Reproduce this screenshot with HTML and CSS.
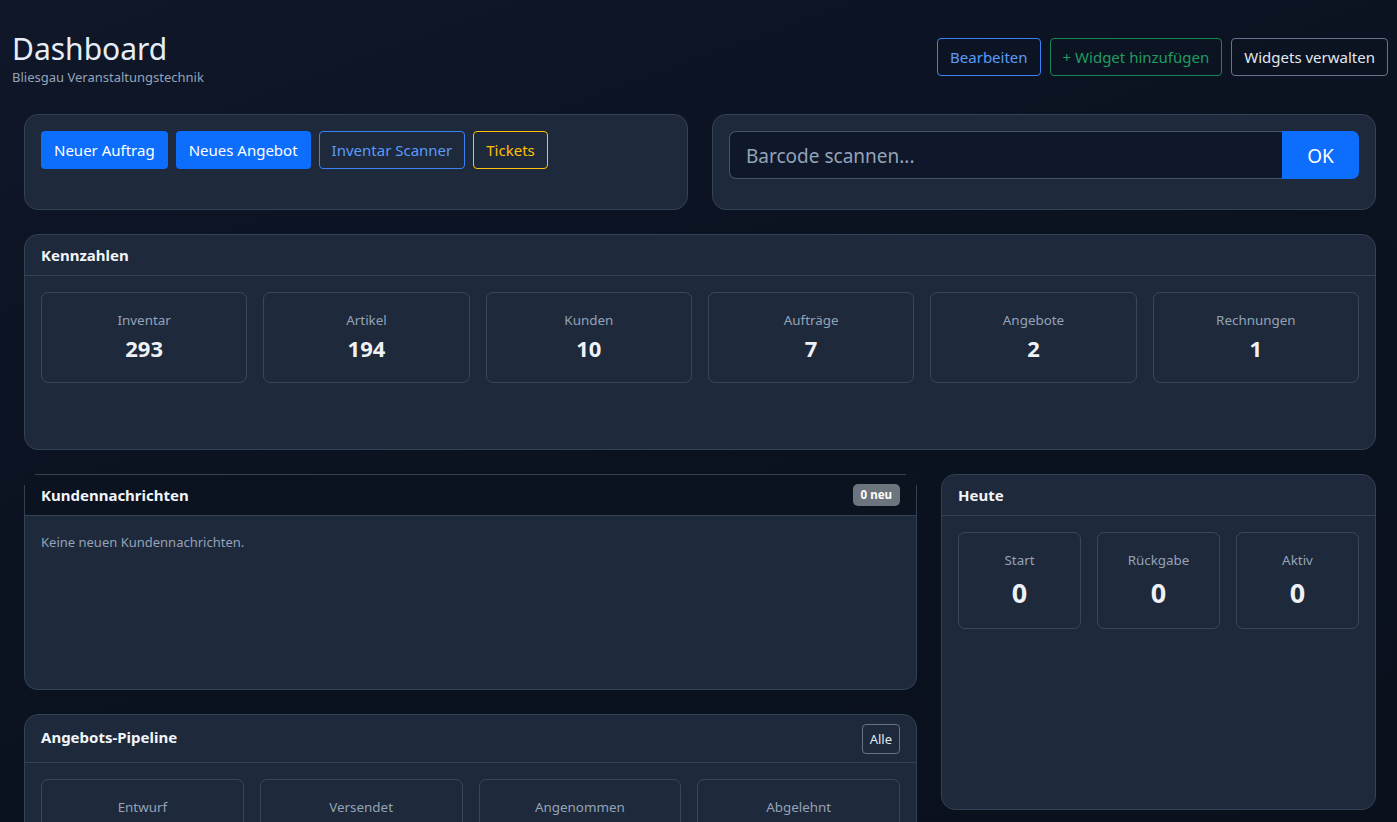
FILE: index.html
```html
<!DOCTYPE html>
<html lang="de">
  <head>
    <title>Dashboard</title>
    <meta charset="UTF-8">
    <link rel="stylesheet" href="styles.css">
  </head>
  <body>
    <!--Page header with widget controls-->
    <div class="page-head">
      <div>
        <h1>Dashboard</h1>
        <div class="subtitle">Bliesgau Veranstaltungstechnik</div>
      </div>
      <div class="head-actions">
        <button class="btn btn-outline-primary">Bearbeiten</button>
        <button class="btn btn-outline-success">+ Widget hinzufügen</button>
        <button class="btn btn-outline-light">Widgets verwalten</button>
      </div>
    </div>

    <div class="content">
      <!--Quick actions and barcode scanner-->
      <div class="row two">
        <div class="card card-pad quick">
          <button class="btn btn-primary">Neuer Auftrag</button>
          <button class="btn btn-primary">Neues Angebot</button>
          <button class="btn btn-outline-primary">Inventar Scanner</button>
          <button class="btn btn-outline-warning">Tickets</button>
        </div>
        <div class="card card-pad scan">
          <div class="input-group">
            <input type="text" class="scan-input" placeholder="Barcode scannen...">
            <button class="btn-ok">OK</button>
          </div>
        </div>
      </div>

      <!--Key figures-->
      <div class="card kpi-card">
        <div class="card-header">Kennzahlen</div>
        <div class="card-body">
          <div class="stat-grid six">
            <div class="stat"><div class="stat-label">Inventar</div><div class="stat-value">293</div></div>
            <div class="stat"><div class="stat-label">Artikel</div><div class="stat-value">194</div></div>
            <div class="stat"><div class="stat-label">Kunden</div><div class="stat-value">10</div></div>
            <div class="stat"><div class="stat-label">Aufträge</div><div class="stat-value">7</div></div>
            <div class="stat"><div class="stat-label">Angebote</div><div class="stat-value">2</div></div>
            <div class="stat"><div class="stat-label">Rechnungen</div><div class="stat-value">1</div></div>
          </div>
        </div>
      </div>

      <div class="row main-split">
        <div class="col-left">
          <!--Customer messages-->
          <div class="card msg-card">
            <div class="card-header dark">
              <span>Kundennachrichten</span>
              <span class="badge">0 neu</span>
            </div>
            <div class="card-body">
              <p class="muted">Keine neuen Kundennachrichten.</p>
            </div>
          </div>

          <!--Offer pipeline-->
          <div class="card pipe-card">
            <div class="card-header tall">
              <span>Angebots-Pipeline</span>
              <button class="btn-sm">Alle</button>
            </div>
            <div class="card-body">
              <div class="stat-grid four">
                <div class="stat pipe"><div class="stat-label">Entwurf</div></div>
                <div class="stat pipe"><div class="stat-label">Versendet</div></div>
                <div class="stat pipe"><div class="stat-label">Angenommen</div></div>
                <div class="stat pipe"><div class="stat-label">Abgelehnt</div></div>
              </div>
            </div>
          </div>
        </div>

        <!--Today-->
        <div class="card today-card">
          <div class="card-header">Heute</div>
          <div class="card-body">
            <div class="stat-grid three">
              <div class="stat tall-stat"><div class="stat-label">Start</div><div class="stat-value big">0</div></div>
              <div class="stat tall-stat"><div class="stat-label">Rückgabe</div><div class="stat-value big">0</div></div>
              <div class="stat tall-stat"><div class="stat-label">Aktiv</div><div class="stat-value big">0</div></div>
            </div>
          </div>
        </div>
      </div>
    </div>
  </body>
</html>
```
FILE: styles.css
```css
body {
	margin: 0;
	font-family: "Segoe UI", "Noto Sans", "Liberation Sans", sans-serif;
	color: #e2e8f0;
	background: linear-gradient(160deg, #0f1729 0%, #0b1220 45%, #0a111d 100%);
	min-height: 822px;
	overflow: hidden;
}
button {font-family: inherit;}

/* header */
.page-head {
	display: flex;
	justify-content: space-between;
	align-items: flex-start;
	padding: 32px 9px 0 12px;
}
h1 {
	margin: 0;
	font-size: 30px;
	font-weight: 400;
	line-height: 34px;
	color: #e6edf7;
}
.subtitle {
	margin-top: 3px;
	font-size: 13px;
	color: #94a3b8;
	line-height: 16px;
}
.head-actions {
	display: flex;
	gap: 9px;
	margin-top: 6px;
}

/* buttons */
.btn {
	font-size: 15px;
	line-height: 22px;
	padding: 7px 12px;
	border-radius: 4px;
	border: 1px solid transparent;
	background: transparent;
	cursor: pointer;
}
.btn-primary {
	background-color: #0d6efd;
	color: #fff;
}
.btn-outline-primary {
	border-color: #3b82f6;
	color: #5b9bfa;
}
.btn-outline-success {
	border-color: #198754;
	color: #1f9d60;
}
.btn-outline-light {
	border-color: #64748b;
	color: #e2e8f0;
}
.btn-outline-warning {
	border-color: #ffc107;
	color: #ffc107;
}

/* layout */
.content {
	padding: 29px 21px 0 24px;
}
.row {
	display: flex;
	gap: 24px;
}
.two > .card {flex: 1;}
.card {
	background-color: #1e293b;
	border: 1px solid #334155;
	border-radius: 14px;
	box-sizing: border-box;
}
.card-pad {
	padding: 16px 16px 0 16px;
	height: 96px;
}
.quick {
	display: flex;
	gap: 8px;
	align-items: flex-start;
}
.input-group {
	display: flex;
	height: 48px;
}
.scan-input {
	flex: 1;
	background-color: #0f172a;
	border: 1px solid #475569;
	border-right: none;
	border-radius: 7px 0 0 7px;
	padding: 2px 16px 0 16px;
	font-family: inherit;
	font-size: 19px;
	color: #e2e8f0;
}
.scan-input::placeholder {color: #94a3b8;}
.btn-ok {
	width: 77px;
	background-color: #0d6efd;
	border: none;
	border-radius: 0 7px 7px 0;
	color: #fff;
	font-size: 19px;
	padding-top: 2px;
}

.card-header {
	display: flex;
	justify-content: space-between;
	align-items: center;
	height: 41px;
	padding: 0 16px;
	box-sizing: border-box;
	border-bottom: 1px solid #334155;
	font-size: 15px;
	font-weight: 700;
	color: #f1f5f9;
}
/* dark header paints over the rounded top corners */
.msg-card {
	border-top: none;
	border-radius: 0 0 14px 14px;
}
.card-header.dark {
	height: 42px;
	margin: 0 -1px;
	padding: 1px 17px 0 17px;
	background:
		linear-gradient(#334155, #334155) 11px 0 / calc(100% - 22px) 1px no-repeat,
		linear-gradient(#334155, #334155) 0 11px / 1px 100% no-repeat,
		linear-gradient(#334155, #334155) 100% 11px / 1px 100% no-repeat,
		#0b1220;
}
.card-header.tall {
	height: 48px;
	padding-bottom: 4px;
}
.card-header.tall .btn-sm {margin-top: 4px;}
.card-body {padding: 16px;}

.kpi-card {
	margin-top: 24px;
	height: 216px;
}
.stat-grid {
	display: grid;
	gap: 16px;
}
.six {grid-template-columns: repeat(6, 1fr);}
.four {grid-template-columns: repeat(4, 1fr);}
.three {grid-template-columns: repeat(3, 1fr);}
.stat {
	border: 1px solid #3a475a;
	border-radius: 7px;
	text-align: center;
	height: 91px;
	box-sizing: border-box;
	padding-top: 17px;
}
.stat-label {
	font-size: 13.4px;
	color: #94a3b8;
	line-height: 20px;
}
.stat-value {
	margin-top: 2px;
	font-size: 22px;
	font-weight: 700;
	color: #eef2f7;
	line-height: 32px;
}
.stat-value.big {
	margin-top: 3px;
	font-size: 27px;
	line-height: 40px;
}
.tall-stat {height: 97px; padding-top: 17px;}
.pipe {height: 60px; padding-top: 17px;}

.main-split {margin-top: 24px;}
.col-left {
	width: 893px;
	display: flex;
	flex-direction: column;
	gap: 24px;
}
.today-card {
	width: 435px;
	height: 336px;
}
.msg-card {height: 216px;}
.badge {
	background-color: #6c757d;
	color: #fff;
	font-size: 11.5px;
	font-weight: 700;
	padding: 3px 8px 4px 8px;
	border-radius: 5px;
}
.muted {
	margin: 1px 0 0 0;
	font-size: 13px;
	color: #94a3b8;
}
.btn-sm {
	background: transparent;
	border: 1px solid #64748b;
	border-radius: 4px;
	color: #e2e8f0;
	font-size: 13px;
	padding: 5px 7px;
}
```
